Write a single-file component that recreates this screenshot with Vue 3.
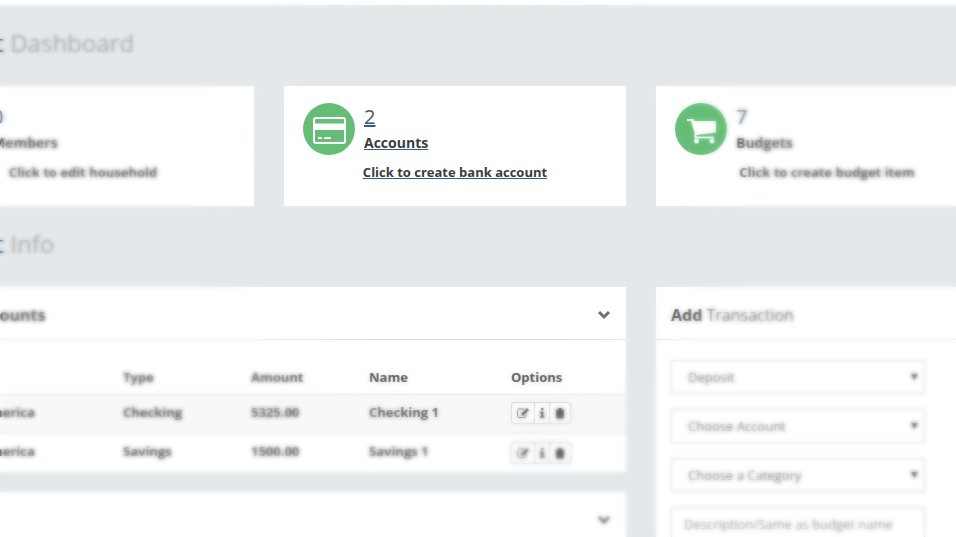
<script setup>
const cards = [
  { icon: 'users', count: '0', label: 'Members', action: 'Click to edit household', active: false },
  { icon: 'card', count: '2', label: 'Accounts', action: 'Click to create bank account', active: true },
  { icon: 'cart', count: '7', label: 'Budgets', action: 'Click to create budget item', active: false },
]
const accounts = [
  { bank: 'Bank of America', type: 'Checking', amount: '5325.00', name: 'Checking 1' },
  { bank: 'Bank of America', type: 'Savings', amount: '1500.00', name: 'Savings 1' },
]
const selects = ['Deposit', 'Choose Account', 'Choose a Category']
</script>

<template>
  <div class="page">
    <div class="topbar"></div>
    <main class="content">
      <h1 class="title"><span>Budget</span> Dashboard</h1>
      <section class="columns">
        <article v-for="c in cards" :key="c.label" class="card" :class="{ active: c.active }">
          <div class="summary">
            <div class="badge">
              <svg v-if="c.icon === 'card'" viewBox="0 0 52 52" aria-hidden="true">
                <rect x="11" y="15" width="31" height="25" rx="2" fill="none" stroke="#fff" stroke-width="2" />
                <path d="M11 20.500h31v6.500H11zM15 34h4v2h-4zM21 34h7v2h-7z" fill="#fff" />
              </svg>
              <svg v-else-if="c.icon === 'cart'" viewBox="0 0 52 52" aria-hidden="true">
                <path d="M12 16h6.500l1 2H41V29.500L21.500 32v1.500H39v2H19.500V30L16 18h-4z" fill="#fff" />
                <circle cx="21.500" cy="38" r="2.500" fill="#fff" />
                <circle cx="37" cy="38" r="2.500" fill="#fff" />
              </svg>
              <svg v-else viewBox="0 0 52 52" aria-hidden="true">
                <circle cx="26" cy="20" r="6" fill="#fff" />
                <path d="M14 38c0-14 24-14 24 0z" fill="#fff" />
              </svg>
            </div>
            <a href="#" class="stat">
              <span class="count">{{ c.count }}</span>
              <span class="label">{{ c.label }}</span>
            </a>
          </div>
          <a href="#" class="action">{{ c.action }}</a>
        </article>
      </section>

      <h2 class="title"><span>Budget</span> Info</h2>
      <div class="columns">
        <div class="wide">
          <section class="panel">
            <header class="panel-head">
              <h3><b>Bank Accounts</b></h3>
              <button type="button" class="toggle" aria-label="Collapse">
                <svg viewBox="0 0 14 10" aria-hidden="true"><path d="M2 2l5 5 5-5" /></svg>
              </button>
            </header>
            <table>
              <colgroup>
                <col /><col class="c-type" /><col class="c-amount" /><col class="c-name" /><col class="c-options" />
              </colgroup>
              <thead>
                <tr><th>Bank</th><th>Type</th><th>Amount</th><th>Name</th><th>Options</th></tr>
              </thead>
              <tbody>
                <tr v-for="a in accounts" :key="a.name">
                  <td>{{ a.bank }}</td>
                  <td>{{ a.type }}</td>
                  <td>{{ a.amount }}</td>
                  <td>{{ a.name }}</td>
                  <td>
                    <div class="group">
                      <button type="button" class="edit" aria-label="Edit">
                        <svg viewBox="0 0 14 12" aria-hidden="true">
                          <path d="M8 2H3a1.500 1.500 0 0 0-1.500 1.500v5.500A1.500 1.500 0 0 0 3 10.500h5.500A1.500 1.500 0 0 0 10 9V8" fill="none" stroke="#555" />
                          <path d="M5.500 6.500L11 1l2 2-5.500 5.500h-2z" fill="#444" />
                        </svg>
                      </button>
                      <button type="button" class="info" aria-label="Details">
                        <svg viewBox="0 0 6 12" aria-hidden="true">
                          <path d="M2 1h2.500v2.200H2zM1 4.500h3.500V9.500H5.500V11H1V9.500h1V6H1z" fill="#444" />
                        </svg>
                      </button>
                      <button type="button" class="remove" aria-label="Delete">
                        <svg viewBox="0 0 12 12" aria-hidden="true">
                          <path d="M1.500 2.500h2.500l.5-1.500h3l.5 1.500h2.500v1.200h-9z" fill="#444" />
                          <path d="M2.200 4h7.600v6.200q0 1.300-1.300 1.300h-5q-1.300 0-1.300-1.300z" fill="#444" />
                          <path d="M4.300 5.200v4.800M6 5.200v4.800M7.700 5.200v4.800" stroke="#999" stroke-width=".6" />
                        </svg>
                      </button>
                    </div>
                  </td>
                </tr>
              </tbody>
            </table>
          </section>
          <section class="panel">
            <header class="panel-head">
              <h3></h3>
              <button type="button" class="toggle" aria-label="Expand">
                <svg viewBox="0 0 14 10" aria-hidden="true"><path d="M2 2l5 5 5-5" /></svg>
              </button>
            </header>
          </section>
        </div>

        <section class="panel">
          <header class="panel-head"><h3><b>Add</b> Transaction</h3></header>
          <form class="form" @submit.prevent>
            <div v-for="s in selects" :key="s" class="select">
              <select :aria-label="s"><option>{{ s }}</option></select>
            </div>
            <input type="text" placeholder="Description/Same as budget name" aria-label="Description" />
          </form>
        </section>
      </div>
    </main>
    <div class="haze"></div>
  </div>
</template>

<style>
body {
  background: #e4e8eb;
  overflow: hidden;
}
</style>

<style scoped>
.page {
  font-family: "Open Sans", "Noto Sans", sans-serif;
  font-size: 13px;
  line-height: 20px;
  color: #505050;
}
.page * {
  box-sizing: border-box;
}
.topbar {
  height: 5px;
  background: #fff;
}
.content {
  margin: 0 -42px 0 -88px;
}
.title {
  margin: 0;
  height: 81px;
  padding: 22px 12px 0;
  font-size: 24px;
  line-height: 32px;
  font-weight: 400;
  color: #a6a9ab;
}
.title span {
  color: #3d5068;
}
.columns {
  display: grid;
  grid-template-columns: repeat(3, minmax(0, 1fr));
  gap: 30px;
  align-items: start;
}
.wide {
  grid-column: span 2;
  display: grid;
  gap: 20px;
}
.card {
  background: #fff;
  height: 120px;
  padding: 17px 19px;
  display: flex;
  flex-direction: column;
}
.card.active {
  color: #3c3c3c;
}
.summary {
  display: flex;
  gap: 9px;
  height: 59px;
}
.badge {
  width: 52px;
  height: 52px;
  border-radius: 50%;
  background: #65bd77;
}
.badge svg {
  display: block;
  width: 52px;
  height: 52px;
}
a {
  color: inherit;
  text-decoration: none;
}
.stat {
  display: flex;
  flex-direction: column;
}
.count {
  font-size: 20px;
  line-height: 28px;
  color: #44546a;
}
.label {
  font-size: 14px;
  font-weight: 700;
  line-height: 24px;
}
.action {
  align-self: center;
  font-weight: 700;
}
.active .count,
.active .label,
.active .action {
  text-decoration: underline;
  text-decoration-color: #2a5f8f;
}
.panel {
  background: #fff;
}
.panel-head {
  display: flex;
  justify-content: space-between;
  align-items: center;
  height: 53px;
  padding: 3px 15px 0;
  border-bottom: 1px solid #dcdfe0;
}
h3 {
  margin: 0;
  font-size: 16px;
  font-weight: 400;
  line-height: 24px;
  color: #6c6c6c;
}
h3 b {
  color: #505050;
}
.toggle {
  border: 0;
  padding: 0;
  background: none;
  width: 14px;
  height: 10px;
}
.toggle svg {
  display: block;
  width: 14px;
  height: 10px;
  fill: none;
  stroke: #707070;
  stroke-width: 3;
}
table {
  width: 100%;
  margin-top: 15px;
  table-layout: fixed;
  border-collapse: collapse;
}
.c-type {
  width: 128px;
}
.c-amount {
  width: 118px;
}
.c-name {
  width: 142px;
}
.c-options {
  width: 123px;
}
th,
td {
  height: 39px;
  padding: 0 8px 4px;
  text-align: left;
  font-weight: 700;
}
th {
  padding: 5px 8px 0;
}
td {
  border-top: 1px solid #dfe1e2;
}
td:last-child {
  padding-bottom: 1px;
}
th:first-child,
td:first-child {
  padding-left: 16px;
}
tbody tr:first-child {
  background: #f8f8f8;
}
.group {
  display: inline-flex;
  vertical-align: middle;
  border: 1px solid #c4c4c4;
  border-radius: 3px;
  background: #fff;
}
.group button {
  display: flex;
  align-items: center;
  justify-content: center;
  height: 20px;
  padding: 0;
  border: 0;
  background: none;
}
.group button + button {
  border-left: 1px solid #c4c4c4;
}
.edit svg {
  width: 14px;
}
.group .edit {
  width: 22px;
}
.group .info {
  width: 15px;
}
.group .remove {
  width: 21px;
}
.info svg {
  width: 6px;
}
.remove svg {
  width: 12px;
}
.form {
  display: grid;
  gap: 15px;
  width: 83%;
  padding: 20px 15px;
}
.select {
  display: grid;
  align-items: center;
}
.select::after {
  content: "";
  grid-area: 1 / 1;
  justify-self: end;
  margin-right: 7px;
  width: 7px;
  height: 6px;
  background: #444;
  clip-path: polygon(0 0, 100% 0, 50% 100%);
  pointer-events: none;
}
select,
input {
  width: 100%;
  height: 34px;
  margin: 0;
  padding: 0 16px;
  border: 1px solid #d6d9db;
  border-radius: 0;
  background: #fff;
  font: inherit;
  color: #777;
  appearance: none;
}
.select select {
  grid-area: 1 / 1;
}
input {
  padding: 0 12px;
}
input::placeholder {
  color: #999;
}
.haze {
  position: fixed;
  inset: 0;
  pointer-events: none;
  backdrop-filter: blur(2px);
  mask-image: radial-gradient(ellipse 31% 47% at 49% 35%, transparent 68%, rgba(0, 0, 0, 0.88) 100%);
}
</style>
